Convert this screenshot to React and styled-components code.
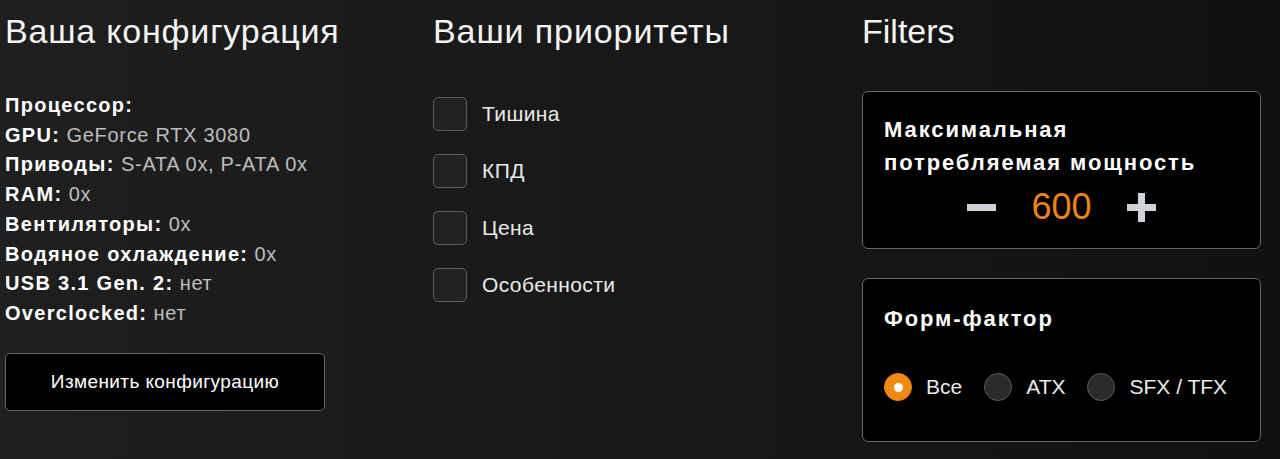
import { useState } from "react";
import styled, { createGlobalStyle } from "styled-components";

const GlobalStyle = createGlobalStyle`
  html, body {
    margin: 0;
    padding: 0;
    background: #161616;
  }
  body {
    font-family: "Liberation Sans", Arial, sans-serif;
    color: #fff;
  }
`;

const config = [
  { label: "Процессор:", value: "" },
  { label: "GPU:", value: "GeForce RTX 3080" },
  { label: "Приводы:", value: "S-ATA 0x, P-ATA 0x" },
  { label: "RAM:", value: "0x" },
  { label: "Вентиляторы:", value: "0x" },
  { label: "Водяное охлаждение:", value: "0x" },
  { label: "USB 3.1 Gen. 2:", value: "нет" },
  { label: "Overclocked:", value: "нет" },
];

const priorities = ["Тишина", "КПД", "Цена", "Особенности"];
const formFactors = ["Все", "ATX", "SFX / TFX"];

export default function App() {
  const [power, setPower] = useState(600);
  const [checked, setChecked] = useState({});
  const [form, setForm] = useState("Все");

  return (
    <>
      <GlobalStyle />
      <Page>
        <Column>
          <Heading $spacing="0.8px">Ваша конфигурация</Heading>
          <InfoList>
            {config.map((row) => (
              <InfoRow key={row.label}>
                <b>{row.label}</b> {row.value}
              </InfoRow>
            ))}
          </InfoList>
          <EditButton>Изменить конфигурацию</EditButton>
        </Column>

        <Column>
          <Heading $spacing="0.9px">Ваши приоритеты</Heading>
          <CheckList>
            {priorities.map((p) => (
              <CheckRow
                key={p}
                onClick={() => setChecked((c) => ({ ...c, [p]: !c[p] }))}
              >
                <CheckBox $on={checked[p]} />
                <span>{p}</span>
              </CheckRow>
            ))}
          </CheckList>
        </Column>

        <Column>
          <Heading>Filters</Heading>
          <Boxes>
            <FilterBox>
              <BoxTitle>
                Максимальная
                <br />
                потребляемая мощность
              </BoxTitle>
              <Stepper>
                <StepButton onClick={() => setPower((v) => v - 50)}>
                  <svg width="29" height="29" viewBox="0 0 29 29">
                    <rect x="0" y="11" width="29" height="7" fill="#cfd2d6" />
                  </svg>
                </StepButton>
                <Value>{power}</Value>
                <StepButton onClick={() => setPower((v) => v + 50)}>
                  <svg width="29" height="29" viewBox="0 0 29 29">
                    <rect x="0" y="11" width="29" height="7" fill="#cfd2d6" />
                    <rect x="11" y="0" width="7" height="29" fill="#cfd2d6" />
                  </svg>
                </StepButton>
              </Stepper>
            </FilterBox>

            <FilterBox $form>
              <BoxTitle>Форм-фактор</BoxTitle>
              <RadioRow>
                {formFactors.map((f) => (
                  <RadioItem key={f} onClick={() => setForm(f)}>
                    <Radio $on={form === f} />
                    <span>{f}</span>
                  </RadioItem>
                ))}
              </RadioRow>
            </FilterBox>
          </Boxes>
        </Column>
      </Page>
    </>
  );
}

const Page = styled.div`
  display: grid;
  grid-template-columns: 428px 429px 1fr;
  padding: 11px 19px 0 5px;
  min-height: 100vh;
  box-sizing: border-box;
  background: linear-gradient(90deg, #1f1f1f 0%, #181818 50%, #111111 100%);
`;

const Column = styled.div`
  display: flex;
  flex-direction: column;
  align-items: flex-start;
`;

const Heading = styled.h2`
  margin: 0;
  font-size: 34px;
  line-height: 40px;
  font-weight: 400;
  color: #f4f4f4;
  letter-spacing: ${(p) => p.$spacing || "0"};
`;

const InfoList = styled.div`
  margin-top: 40px;
  display: flex;
  flex-direction: column;
`;

const InfoRow = styled.div`
  font-size: 20px;
  line-height: 29.7px;
  color: #bdbdbd;
  letter-spacing: 0.7px;
  b {
    color: #fff;
    font-weight: 700;
    letter-spacing: 1.3px;
  }
`;

const EditButton = styled.button`
  margin-top: 24px;
  width: 320px;
  height: 58px;
  background: #000;
  border: 1px solid #666;
  border-radius: 5px;
  color: #fff;
  font-family: inherit;
  font-size: 19px;
  letter-spacing: 0.4px;
  cursor: pointer;
`;

const CheckList = styled.div`
  margin-top: 46px;
  display: flex;
  flex-direction: column;
  gap: 23px;
`;

const CheckRow = styled.label`
  display: flex;
  align-items: center;
  gap: 15px;
  font-size: 21px;
  letter-spacing: 0.4px;
  color: #eaeaea;
  cursor: pointer;
`;

const CheckBox = styled.span`
  width: 34px;
  height: 34px;
  box-sizing: border-box;
  border: 1px solid #5e5e5e;
  border-radius: 5px;
  background: ${(p) => (p.$on ? "#f0890f" : "#222")};
`;

const Boxes = styled.div`
  margin-top: 40px;
  width: 100%;
  display: flex;
  flex-direction: column;
  gap: 29px;
`;

const FilterBox = styled.div`
  box-sizing: border-box;
  height: ${(p) => (p.$form ? "164px" : "158px")};
  padding: ${(p) => (p.$form ? "23px 21px 0" : "21px 21px 0")};
  background: #000;
  border: 1px solid #666;
  border-radius: 6px;
  display: flex;
  flex-direction: column;
`;

const BoxTitle = styled.div`
  font-size: 22px;
  line-height: 33px;
  font-weight: 700;
  letter-spacing: 1.9px;
  color: #fff;
`;

const Stepper = styled.div`
  display: flex;
  align-items: center;
  justify-content: center;
  gap: 35px;
  height: 44px;
  margin-top: 6px;
`;

const StepButton = styled.button`
  padding: 0;
  border: none;
  background: none;
  display: flex;
  cursor: pointer;
`;

const Value = styled.span`
  font-size: 36px;
  line-height: 44px;
  color: #ec8413;
  font-weight: 400;
`;

const RadioRow = styled.div`
  margin-top: 38px;
  display: flex;
  align-items: center;
  gap: 22px;
`;

const RadioItem = styled.label`
  display: flex;
  align-items: center;
  gap: 14px;
  font-size: 21px;
  color: #eaeaea;
  cursor: pointer;
`;

const Radio = styled.span`
  position: relative;
  width: 28px;
  height: 28px;
  box-sizing: border-box;
  border-radius: 50%;
  border: 1px solid ${(p) => (p.$on ? "#f0890f" : "#5a5a5a")};
  background: ${(p) => (p.$on ? "#f0890f" : "#2a2a2a")};
  &::after {
    content: "";
    display: ${(p) => (p.$on ? "block" : "none")};
    position: absolute;
    left: 50%;
    top: 50%;
    width: 9px;
    height: 9px;
    margin: -4.5px 0 0 -4.5px;
    border-radius: 50%;
    background: #fff;
  }
`;
